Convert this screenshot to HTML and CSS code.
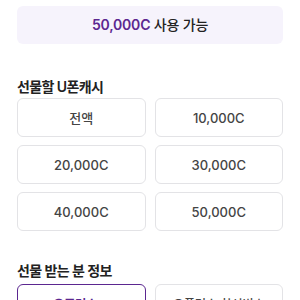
FILE: index.html
```html
<!DOCTYPE html>
<html lang="ko">
<head>
  <meta charset="UTF-8" />
  <meta name="viewport" content="width=device-width, initial-scale=1.0"/>
  <title>U폰캐시 선물하기</title>
  <link rel="stylesheet" href="styles.css">
</head>
<body>

<div class="page">
  <div class="balance">
    <p class="balance-text"><span class="balance-amount">50,000C</span> 사용 가능</p>
  </div>

  <h2 class="section-title first">선물할 U폰캐시</h2>
  <div class="amount-grid">
    <button class="amount-btn">전액</button>
    <button class="amount-btn">10,000C</button>
    <button class="amount-btn">20,000C</button>
    <button class="amount-btn">30,000C</button>
    <button class="amount-btn">40,000C</button>
    <button class="amount-btn">50,000C</button>
  </div>

  <h2 class="section-title second">선물 받는 분 정보</h2>
  <div class="tab-row">
    <button class="tab-btn active">유플러스ID</button>
    <button class="tab-btn">유플러스 회선번호</button>
  </div>
</div>

</body>
</html>
```

FILE: styles.css
```css
:root {
  --purple: #5b2790;
  --border: #e3e3e6;
  --text: #222;
}
html, body {
  margin: 0;
  padding: 0;
  background: #fff;
}
body {
  font-family: Inter, "Noto Sans CJK KR", sans-serif;
  color: var(--text);
}
.page {
  padding: 6px 17px 0;
}
.balance {
  height: 38px;
  background: #f6f3fc;
  border-radius: 6px;
  display: flex;
  align-items: center;
  justify-content: center;
}
.balance-text {
  margin: 0;
  font-size: 14px;
  font-weight: 500;
  line-height: 20px;
  letter-spacing: -0.2px;
  color: #222;
}
.balance-amount {
  color: var(--purple);
  font-weight: 600;
}
.section-title {
  margin: 0;
  font-size: 14px;
  font-weight: 600;
  line-height: 20px;
  letter-spacing: -0.6px;
  color: var(--text);
}
.section-title.first {
  margin-top: 33px;
}
.section-title.second {
  margin-top: 30px;
}
.amount-grid {
  margin-top: 1px;
  display: grid;
  grid-template-columns: 1fr 1fr;
  column-gap: 9px;
  row-gap: 8px;
}
.amount-btn, .tab-btn {
  height: 39px;
  margin: 0;
  padding: 0;
  background: #fff;
  border: 1px solid var(--border);
  border-radius: 6px;
  font-family: inherit;
  font-size: 13px;
  font-weight: 500;
  color: #444;
}
.tab-row {
  margin-top: 3px;
  display: grid;
  grid-template-columns: 1fr 1fr;
  column-gap: 9px;
}
.tab-btn {
  font-size: 12px;
}
.tab-btn.active {
  border-color: var(--purple);
  color: var(--purple);
  font-weight: 600;
}
```
